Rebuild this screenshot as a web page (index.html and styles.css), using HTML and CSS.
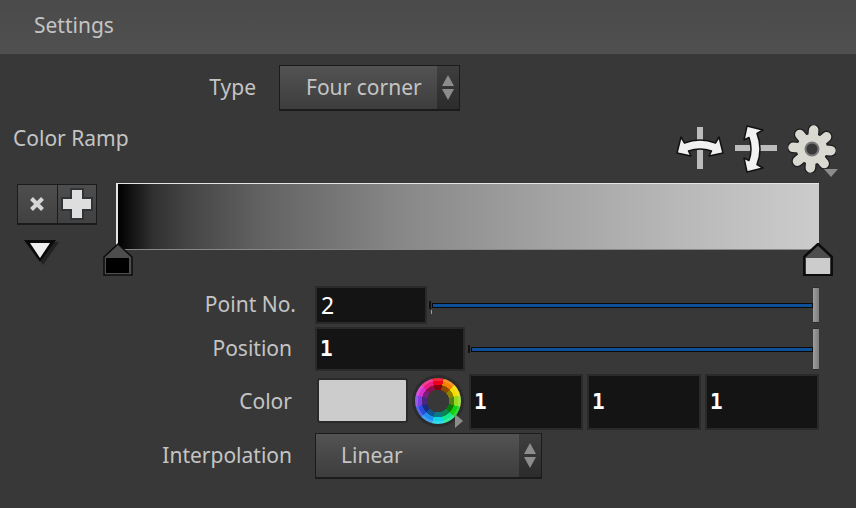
FILE: index.html
```html
<!DOCTYPE html>
<html lang="en">
<head>
<meta charset="utf-8">
<title>Settings</title>
<link rel="stylesheet" href="styles.css">
</head>
<body>
<header class="header">Settings</header>
<main class="panel">
  <div class="row type-row">
    <label class="label type-label">Type</label>
    <div class="select type-select">
      <span class="select-text">Four corner</span>
      <span class="arrows"><i class="up"></i><i class="down"></i></span>
    </div>
  </div>
  <div class="ramp-head">
    <span class="ramp-title">Color Ramp</span>
    <div class="tools">
      <svg class="tool" width="50" height="46" viewBox="0 0 50 46">
        <rect x="21" y="2" width="6" height="42" fill="#bcbcbc"/>
        <path d="M1 28 L5 12 L8.500 18 Q24 12 39.500 18 L43 12 L47 28 L33 31 L35.500 26 Q24 22 12.500 26 L15 31 Z" fill="#f1f1f1" stroke="#111" stroke-width="1.500" stroke-linejoin="round"/>
      </svg>
      <svg class="tool" width="46" height="48" viewBox="0 0 46 48">
        <rect x="1" y="20" width="42" height="6" fill="#bcbcbc"/>
        <path d="M13 1 L29 5 L23 8.500 Q29 24 23 39.500 L29 43 L13 47 L10 33 L15 35.500 Q19 24 15 12.500 L10 15 Z" fill="#f1f1f1" stroke="#111" stroke-width="1.500" stroke-linejoin="round"/>
      </svg>
      <span class="gear-wrap">
        <svg width="48" height="48" viewBox="0 0 48 48">
          <g transform="rotate(5 24 24)" stroke-linecap="round">
            <g stroke="#1c1c1c" stroke-width="12">
              <path d="M24 5 V43 M5 24 H43 M10.600 10.600 L37.400 37.400 M37.400 10.600 L10.600 37.400"/>
            </g>
            <circle cx="24" cy="24" r="16" fill="#1c1c1c"/>
            <g stroke="#d9d9d2" stroke-width="9.500">
              <path d="M24 5 V43 M5 24 H43 M10.600 10.600 L37.400 37.400 M37.400 10.600 L10.600 37.400"/>
            </g>
            <circle cx="24" cy="24" r="15" fill="#d9d9d2"/>
          </g>
          <circle cx="24" cy="24" r="6.500" fill="#383838" stroke="#777" stroke-width="2"/>
        </svg>
        <i class="gear-caret"></i>
      </span>
    </div>
  </div>
  <div class="ramp-area">
    <div class="ramp-side">
      <div class="btn-group">
        <button class="btn" type="button">
          <svg width="16" height="16" viewBox="0 0 16 16"><path d="M2.500 2.500 L13.500 13.500 M13.500 2.500 L2.500 13.500" stroke="#d6d6d6" stroke-width="4"/></svg>
        </button>
        <button class="btn" type="button">
          <svg width="36" height="36" viewBox="0 0 36 36"><path class="plus" d="M13 4 H23 V13 H32 V23 H23 V32 H13 V23 H4 V13 H13 Z"/></svg>
        </button>
      </div>
      <svg class="tri" width="36" height="26" viewBox="0 0 36 26"><path d="M5 3 H36 L20 26 Z" fill="#222"/><path d="M1 1 H33 L17 23 Z" fill="#0a0a0a"/><path d="M7 4 H27 L17 19 Z" fill="#efefef"/></svg>
    </div>
    <div class="ramp"></div>
    <svg class="marker marker-left" width="30" height="33" viewBox="0 0 30 33"><path d="M15 1 L29 14 V32 H1 V14 Z" fill="#4d4d4d" stroke="#0c0c0c" stroke-width="1.500"/><rect x="3" y="15" width="23" height="15" fill="#000"/></svg>
    <svg class="marker marker-right" width="30" height="33" viewBox="0 0 30 33"><path d="M15 1 L29 14 V32 H1 V14 Z" fill="#4d4d4d" stroke="#0c0c0c" stroke-width="2.500"/><rect x="3" y="15" width="24" height="16" fill="#ccc"/></svg>
  </div>
  <div class="row point-row">
    <label class="label point-label">Point No.</label>
    <div class="field point-field plain">2</div>
    <div class="slider"><span class="slider-start"></span><span class="track"></span><span class="handle"></span></div>
  </div>
  <div class="row position-row">
    <label class="label position-label">Position</label>
    <div class="field position-field">1</div>
    <div class="slider"><span class="slider-start"></span><span class="track"></span><span class="handle"></span></div>
  </div>
  <div class="row color-row">
    <label class="label color-label">Color</label>
    <div class="swatch"></div>
    <span class="wheel-wrap"><span class="wheel"></span><i class="wheel-caret"></i></span>
    <div class="field color-field">1</div>
    <div class="field color-field">1</div>
    <div class="field color-field">1</div>
  </div>
  <div class="row interp-row">
    <label class="label interp-label">Interpolation</label>
    <div class="select interp-select">
      <span class="select-text">Linear</span>
      <span class="arrows"><i class="up"></i><i class="down"></i></span>
    </div>
  </div>
</main>
</body>
</html>
```
FILE: styles.css
```css
* { box-sizing: border-box; }
html, body { margin: 0; padding: 0; }
body {
  width: 856px;
  height: 508px;
  overflow: hidden;
  background: #383838;
  color: #c4c4c4;
  font-family: "Noto Sans", sans-serif;
  font-size: 21px;
}
.header {
  height: 54px;
  padding: 9px 0 0 34px;
  line-height: 32px;
  background: linear-gradient(#4a4a4a, #505050);
}
.panel { display: flex; flex-direction: column; }
.row { display: flex; align-items: center; }
.label { text-align: right; line-height: 30px; padding-bottom: 2px; }
.type-row { margin-top: 11px; height: 46px; }
.type-label { width: 256px; margin-right: 23px; }
.select {
  position: relative;
  display: flex;
  align-items: center;
  height: 46px;
  border: 1px solid #1b1b1b;
  border-bottom-width: 2px;
  background: linear-gradient(#535353, #3d3d3d);
}
.type-select { width: 181px; }
.interp-select { width: 227px; }
.select-text { flex: 1; padding-left: 26px; padding-bottom: 1px; }
.interp-select .select-text { padding-left: 25px; }
.arrows {
  width: 22px;
  height: 100%;
  background: linear-gradient(#3e3e3e, #2c2c2c);
  display: flex;
  flex-direction: column;
  justify-content: center;
  align-items: center;
  gap: 3px;
}
.arrows .up, .arrows .down {
  width: 0;
  height: 0;
  border-left: 6px solid transparent;
  border-right: 6px solid transparent;
}
.arrows .up { border-bottom: 11px solid #8c8c8c; }
.arrows .down { border-top: 11px solid #8c8c8c; }
.ramp-head {
  display: flex;
  justify-content: space-between;
  height: 72px;
  margin-top: 14px;
  padding: 0 18px 0 13px;
}
.ramp-title { line-height: 26px; }
.tools { display: flex; align-items: flex-start; gap: 8px; }
.tool { display: block; }
.gear-wrap { position: relative; display: block; width: 50px; height: 52px; }
.gear-caret {
  position: absolute;
  right: 0;
  bottom: 0;
  border-left: 7px solid transparent;
  border-right: 7px solid transparent;
  border-top: 8px solid #8c8c8c;
}
.ramp-area { position: relative; display: flex; height: 103px; padding-left: 17px; margin-top: -14px; }
.ramp-side { width: 99px; }
.btn-group {
  display: flex;
  width: 80px;
  height: 41px;
  margin-top: 1px;
  border: 1px solid #1b1b1b;
  border-bottom-width: 2px;
  background: linear-gradient(#4e4e4e, #414141);
}
.btn {
  flex: 1;
  display: flex;
  align-items: center;
  justify-content: center;
  padding: 0;
  border: 0;
  background: none;
}
.btn + .btn { border-left: 1px solid #1b1b1b; }
.plus { fill: #dedede; stroke: #2e3438; stroke-width: 4; paint-order: stroke; }
.tri { display: block; margin: 14px 0 0 6px; }
.ramp {
  width: 703px;
  height: 67px;
  border-top: 1px solid #e4e4e4;
  border-left: 2px solid #e4e4e4;
  border-bottom: 1px solid #888;
  background: linear-gradient(90deg, #000 0, #303030 5%, #454545 10%, #616161 20%, #878787 40%, #a1a1a1 60%, #b8b8b8 80%, #ccc 100%);
}
.marker { position: absolute; top: 60px; display: block; }
.marker-left { left: 103px; }
.marker-right { left: 803px; }
.field {
  display: flex;
  align-items: center;
  padding-left: 3px;
  background: #141414;
  border: 2px solid #2a2a2a;
  color: #fff;
  font-family: "DejaVu Sans Mono", monospace;
  font-weight: 700;
  font-size: 21px;
}
.field.plain { font-weight: 400; font-size: 23px; padding-left: 4px; font-family: "Noto Sans", sans-serif; }
.point-row { height: 38px; }
.point-label { width: 296px; margin-right: 19px; }
.point-field { width: 112px; height: 38px; }
.position-row { height: 44px; margin-top: 3px; }
.position-label { width: 292px; margin-right: 23px; }
.position-field { width: 150px; height: 44px; }
.slider { position: relative; flex: 1; height: 36px; margin-right: 37px; display: flex; align-items: center; }
.point-row .slider { margin-left: 2px; }
.position-row .slider { margin-left: 3px; height: 42px; }
.track {
  flex: 1;
  height: 5px;
  margin: 0 6px 0 1px;
  background: #0d5099;
  border: 1px solid #0a0a0a;
}
.slider-start { position: relative; width: 2px; height: 8px; background: #111; }
.point-row .slider-start::after {
  content: "";
  position: absolute;
  left: 2px;
  top: 9px;
  width: 1px;
  height: 4px;
  background: #9a9a9a;
}
.handle {
  position: absolute;
  right: 0;
  top: 0;
  width: 6px;
  height: 100%;
  background: linear-gradient(90deg, #9f9f9f, #7c7c7c);
  border: 1px solid #2c2c2c;
  border-width: 1px 0;
}
.color-row { height: 56px; margin-top: 3px; }
.color-label { width: 292px; margin-right: 25px; padding-bottom: 3px; }
.swatch {
  width: 91px;
  height: 45px;
  margin-bottom: 4px;
  background: #ccc;
  border: 2px solid #2a2a2a;
  border-radius: 3px;
}
.wheel-wrap { position: relative; display: block; width: 56px; height: 52px; margin-left: 5px; }
.wheel {
  position: absolute;
  left: 2px;
  top: 2px;
  width: 46px;
  height: 46px;
  border-radius: 50%;
  background:
    radial-gradient(circle, #383838 0 11px, rgba(0,0,0,.42) 11.500px 16px, rgba(0,0,0,0) 16.500px 20px, rgba(255,255,255,.16) 20.500px 23px),
    conic-gradient(#f00018 0 15deg, #f58200 15deg 45deg, #f5dc00 45deg 75deg, #94dc20 75deg 105deg, #10d010 105deg 135deg, #10e88c 135deg 165deg, #10d4e8 165deg 195deg, #1e90f0 195deg 225deg, #2c4ce0 225deg 255deg, #8040e0 255deg 285deg, #d830d0 285deg 315deg, #ee1c80 315deg 345deg, #f00018 345deg 360deg);
  box-shadow: 0 0 0 3px #2c2c2c;
}
.wheel-caret {
  position: absolute;
  right: 6px;
  bottom: 0;
  border-top: 7px solid transparent;
  border-bottom: 7px solid transparent;
  border-left: 8px solid #8c8c8c;
}
.color-field { height: 56px; width: 114px; }
.color-field + .color-field { margin-left: 4px; }
.interp-row { margin-top: 3px; height: 46px; }
.interp-label { width: 292px; margin-right: 23px; }
```
